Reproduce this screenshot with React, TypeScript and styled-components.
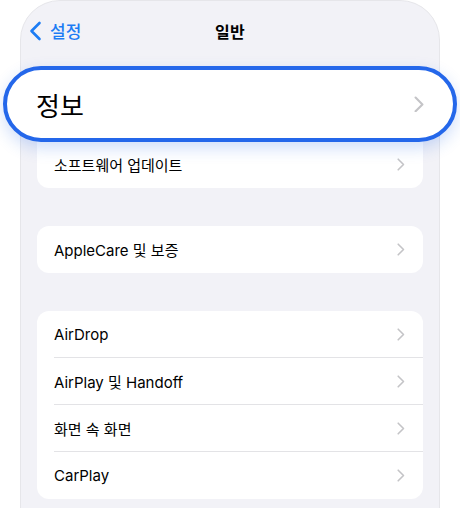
import styled, { createGlobalStyle } from "styled-components";

const GlobalStyle = createGlobalStyle`
    html, body {
        margin: 0;
        padding: 0;
        background: #ffffff;
    }
    body {
        font-family: "Inter", "Noto Sans CJK KR", sans-serif;
        -webkit-font-smoothing: antialiased;
    }
`;

const Page = styled.div`
    position: relative;
    width: 460px;
    height: 508px;
    padding: 0 20px;
    box-sizing: border-box;
    overflow: hidden;
`;

const Phone = styled.div`
    height: 530px;
    background: #f2f2f7;
    border: 1.5px solid #e6e6ea;
    border-radius: 40px 40px 0 0;
    box-sizing: border-box;
`;

const NavBar = styled.div`
    position: relative;
    height: 60px;
    display: flex;
    align-items: center;
    justify-content: center;
`;

const BackButton = styled.div`
    position: absolute;
    left: 8px;
    top: 17px;
    display: flex;
    align-items: center;
    gap: 8px;
    color: #1c7cf4;
    font-size: 17px;
    font-weight: 500;
`;

const Title = styled.h1`
    margin: 0;
    font-size: 16px;
    font-weight: 700;
    color: #000;
    letter-spacing: 0.3px;
`;

const Content = styled.div`
    padding: 33px 16px 0;
    display: flex;
    flex-direction: column;
    gap: 38px;
`;

const Card = styled.div`
    background: #fff;
    border-radius: 12px;
    overflow: hidden;
`;

const Row = styled.div<{ $last?: boolean }>`
    height: 47px;
    box-sizing: border-box;
    margin-left: 17px;
    padding-right: 18px;
    display: flex;
    align-items: center;
    justify-content: space-between;
    border-bottom: ${(p) => (p.$last ? "none" : "1px solid #e3e3e6")};
    font-size: 15px;
    color: #000;
`;

const Label = styled.span<{ $hidden?: boolean }>`
    visibility: ${(p) => (p.$hidden ? "hidden" : "visible")};
`;

const Highlight = styled.div`
    position: absolute;
    left: 3px;
    top: 66px;
    width: 454px;
    height: 76px;
    box-sizing: border-box;
    border: 4px solid #2467ea;
    border-radius: 38px;
    background: #fff;
    padding: 0 29px;
    display: flex;
    align-items: center;
    justify-content: space-between;
    font-size: 26px;
    color: #000;
    box-shadow: 0 6px 16px rgba(36, 103, 234, 0.22);
`;

const Chevron = ({ size = 1, color = "#c4c4c7" }: { size?: number; color?: string }) => (
    <svg width={8 * size} height={13 * size} viewBox="0 0 8 13" fill="none">
        <path
            d="M1.2 1.2 L6.5 6.5 L1.2 11.8"
            stroke={color}
            strokeWidth={1.6}
            strokeLinecap="round"
            strokeLinejoin="round"
        />
    </svg>
);

const BackChevron = () => (
    <svg width="13" height="20" viewBox="0 0 13 20" fill="none">
        <path
            d="M10.5 2 L2.5 10 L10.5 18"
            stroke="#1c7cf4"
            strokeWidth={2.6}
            strokeLinecap="round"
            strokeLinejoin="round"
        />
    </svg>
);

// first row of the first group sits under the enlarged highlight
const groups = [
    ["정보", "소프트웨어 업데이트"],
    ["AppleCare 및 보증"],
    ["AirDrop", "AirPlay 및 Handoff", "화면 속 화면", "CarPlay"],
];

const App = () => {
    return (
        <>
            <GlobalStyle />
            <Page>
                <Phone>
                    <NavBar>
                        <BackButton>
                            <BackChevron />
                            설정
                        </BackButton>
                        <Title>일반</Title>
                    </NavBar>
                    <Content>
                        {groups.map((items, gi) => (
                            <Card key={gi}>
                                {items.map((label, i) => (
                                    <Row key={label} $last={i === items.length - 1}>
                                        <Label $hidden={gi === 0 && i === 0}>{label}</Label>
                                        <Chevron />
                                    </Row>
                                ))}
                            </Card>
                        ))}
                    </Content>
                </Phone>
                <Highlight>
                    정보
                    <Chevron size={1.3} />
                </Highlight>
            </Page>
        </>
    );
};

export default App;
